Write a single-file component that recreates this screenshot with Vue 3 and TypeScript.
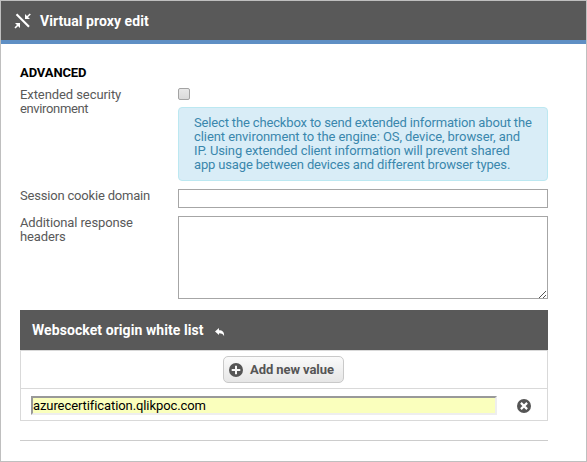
<script setup lang="ts">
import { ref } from 'vue'

const extendedSecurity = ref(false)
const cookieDomain = ref('')
const responseHeaders = ref('')
const whiteList = ref<string[]>(['azurecertification.qlikpoc.com'])

const helpLines = [
  'Select the checkbox to send extended information about the',
  'client environment to the engine: OS, device, browser, and',
  'IP. Using extended client information will prevent shared',
  'app usage between devices and different browser types.',
]

function addValue() {
  whiteList.value.push('')
}

function removeValue(index: number) {
  whiteList.value.splice(index, 1)
}
</script>

<template>
  <div class="dialog">
    <header class="titlebar">
      <svg class="collapse" viewBox="0 0 18 16" width="18" height="16">
        <path d="M2.5 1.2 15 13.8" fill="none" stroke="#fff" stroke-width="2.1" />
        <path d="M11 1v5h5zM1 10h5v5z" fill="#fff" />
        <path d="M12.5 4.5 16.3 1M4.5 11.5 1 15" fill="none" stroke="#fff" stroke-width="1.6" />
      </svg>
      <h1>Virtual proxy edit</h1>
    </header>
    <main class="content">
      <h2>ADVANCED</h2>
      <div class="field security">
        <label for="ext">Extended security<br /><span>environment</span></label>
        <div class="control">
          <input id="ext" v-model="extendedSecurity" class="check" type="checkbox" />
          <div class="help">
            <span v-for="line in helpLines" :key="line">{{ line }}</span>
          </div>
        </div>
      </div>
      <div class="field domain">
        <label for="domain">Session cookie domain</label>
        <input id="domain" v-model="cookieDomain" class="text" type="text" />
      </div>
      <div class="field headers">
        <label for="headers">Additional response<br />headers</label>
        <div class="area">
          <textarea id="headers" v-model="responseHeaders"></textarea>
          <svg class="grip" viewBox="0 0 8 8" width="8" height="8" shape-rendering="crispEdges">
            <path d="M0 7h1v1H0zM1 6h1v1H1zM2 5h1v1H2zM3 4h1v1H3zM4 3h1v1H4zM5 2h1v1H5zM6 1h1v1H6zM4 7h1v1H4zM5 6h1v1H5zM6 5h1v1H6z" fill="#555" />
          </svg>
        </div>
      </div>
      <section class="list">
        <div class="list-title">
          <h3>Websocket origin white list</h3>
          <svg viewBox="0 0 10 9" width="10" height="9">
            <path d="M0 3.5 4 0v2.3c3.6 0 5.4 1.7 5.1 6-.8-2.2-2.1-3.1-5.1-3.1V7z" fill="#fff" />
          </svg>
        </div>
        <div class="list-add">
          <button class="add" type="button" @click="addValue">
            <svg viewBox="0 0 14 14" width="14" height="14">
              <circle cx="7" cy="7" r="7" fill="#555" />
              <path d="M7 2.7v8.6M2.7 7h8.6" stroke="#f7f7f7" stroke-width="2" />
            </svg>
            <span>Add new value</span>
          </button>
        </div>
        <div v-for="(_, i) in whiteList" :key="i" class="list-row">
          <input v-model="whiteList[i]" class="value" type="text" />
          <button class="remove" type="button" aria-label="Remove" @click="removeValue(i)">
            <svg viewBox="0 0 14 14" width="14" height="14">
              <circle cx="7" cy="7" r="7" fill="#555" />
              <path d="m3.9 3.9 6.2 6.2m0-6.2-6.2 6.2" stroke="#fff" stroke-width="2.2" />
            </svg>
          </button>
        </div>
      </section>
      <hr />
    </main>
  </div>
</template>

<style>
body {
  background: #fff;
}
</style>

<style scoped>
* {
  box-sizing: border-box;
}

.dialog {
  width: 587px;
  height: 462px;
  border: 1px solid #bfbfbf;
  background: #fff;
  color: #595959;
  font: 13px/14px Roboto, 'Liberation Sans', sans-serif;
  overflow: hidden;
}

.titlebar {
  display: flex;
  align-items: center;
  height: 43px;
  padding: 0 13px;
  background: #595959;
  border-bottom: 4px solid #5f8fc4;
}

.collapse {
  margin-right: 8px;
}

h1,
h2,
h3 {
  margin: 0;
  font-weight: 700;
  white-space: nowrap;
}

h1 {
  color: #fff;
  font-size: 14px;
  line-height: 16px;
  letter-spacing: 0.06px;
}

.content {
  padding: 22px 38px 0 19px;
}

h2 {
  color: #000;
  font-size: 13px;
  line-height: 14px;
  letter-spacing: -0.1px;
}

.field {
  display: grid;
  grid-template-columns: 158px 370px;
  align-items: start;
  white-space: nowrap;
}

.security {
  margin-top: 8px;
}

.security label {
  letter-spacing: -0.08px;
}

.security label span {
  letter-spacing: -0.36px;
}

.check {
  display: block;
  appearance: none;
  width: 12px;
  height: 12px;
  margin: 0 0 7px;
  border: 1px solid #a3a3a3;
  border-radius: 2px;
  background: linear-gradient(#e8e8e8, #dadada);
}

.check:checked {
  background: #595959;
}

.help {
  display: flex;
  flex-direction: column;
  height: 74px;
  padding: 8px 15px;
  border: 1px solid #bce8f1;
  border-radius: 4px;
  background: #d9edf7;
  color: #3a87ad;
}

.help span {
  letter-spacing: -0.155px;
}

.help span:nth-child(2) {
  letter-spacing: -0.07px;
}

.help span:nth-child(3) {
  letter-spacing: -0.11px;
}

.domain {
  margin-top: 8px;
}

.domain label {
  letter-spacing: -0.19px;
}

.text,
textarea {
  display: block;
  width: 370px;
  margin: 0;
  padding: 1px 3px;
  border: 1px solid #a6a6a6;
  border-radius: 0;
  background: #fff;
  font: inherit;
  outline: 0;
}

.text {
  height: 19px;
}

.headers {
  margin-top: 8px;
}

.headers label {
  letter-spacing: -0.12px;
}

.area {
  position: relative;
  height: 83px;
}

textarea {
  height: 83px;
  resize: none;
}

.grip {
  position: absolute;
  right: 1px;
  bottom: 1px;
}

.list {
  width: 528px;
  margin-top: 11px;
}

.list-title {
  display: flex;
  align-items: center;
  gap: 11px;
  height: 40px;
  padding-left: 12px;
  background: #595959;
}

.list-title h3 {
  color: #fff;
  font-size: 14px;
  line-height: 16px;
  letter-spacing: 0.07px;
}

.list-title svg {
  margin-top: 4px;
}

.list-add {
  display: flex;
  justify-content: center;
  height: 38px;
  padding-top: 5px;
  border: 1px solid #d9d9d9;
  border-bottom: 0;
}

.add {
  display: flex;
  align-items: center;
  gap: 7px;
  width: 121px;
  height: 27px;
  margin-right: 1px;
  padding: 0 0 0 5px;
  border: 1px solid #c9c9c9;
  border-radius: 5px;
  background: linear-gradient(#fafafa, #e6e6e6);
  color: #555;
  font: 700 13px/16px Roboto, sans-serif;
  letter-spacing: -0.08px;
  white-space: nowrap;
}

.list-row {
  display: flex;
  align-items: flex-start;
  height: 33px;
  padding: 7px 0 0 10px;
  border: 1px solid #d9d9d9;
}

.value {
  width: 466px;
  height: 19px;
  margin: 0;
  padding: 0;
  border: 2px solid;
  border-color: #999 #eee #eee #999;
  background: #faffbd;
  color: #000;
  font: 13px/15px Roboto, sans-serif;
  letter-spacing: -0.09px;
  outline: 0;
}

.remove {
  display: block;
  width: 14px;
  height: 14px;
  margin: 3px 0 0 19.5px;
  padding: 0;
  border: 0;
  background: none;
}

.remove svg {
  display: block;
}

hr {
  width: 528px;
  height: 1px;
  margin: 19px 0 0;
  border: 0;
  background: #ccc;
}
</style>
